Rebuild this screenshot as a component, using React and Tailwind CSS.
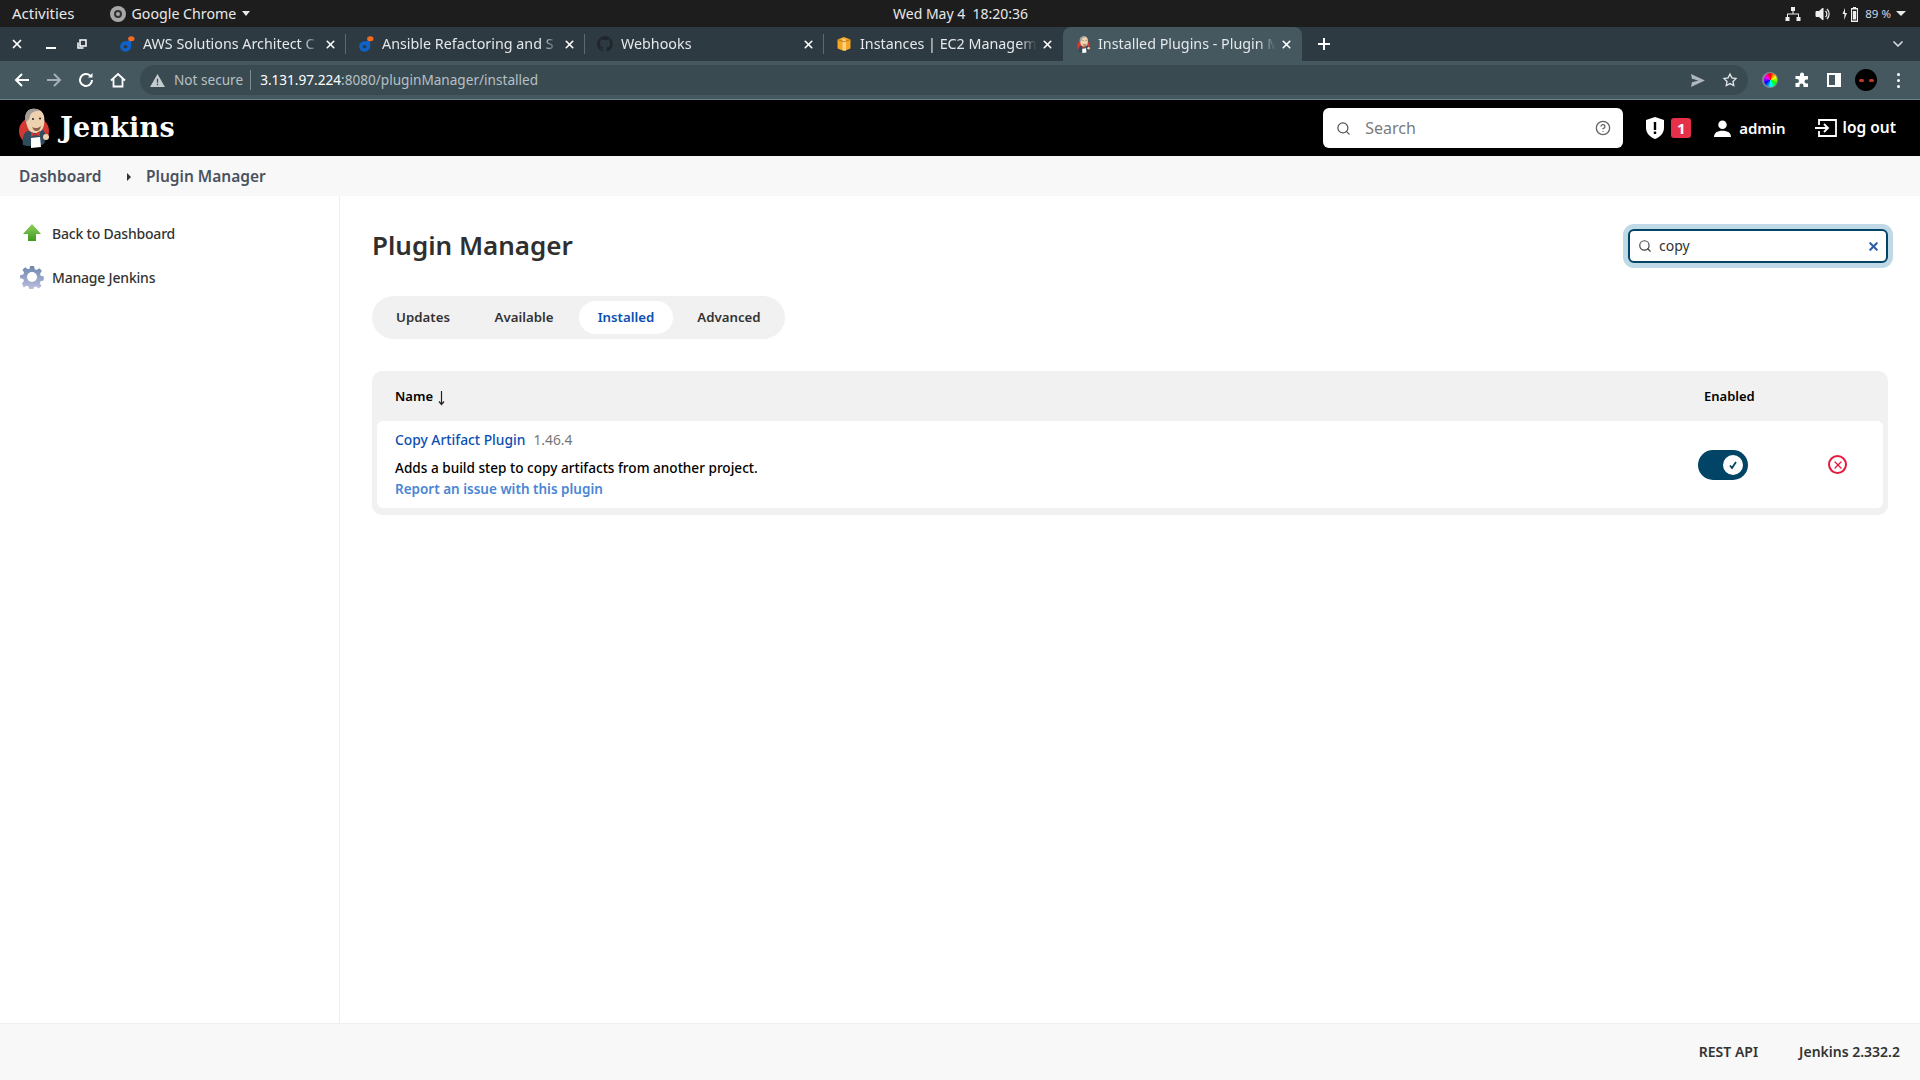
import { ChevronDown, CircleHelp, Search, X } from 'lucide-react';

const SANS = "font-['Noto_Sans',sans-serif]";

function JenkinsLogo({ className }) {
  return (
    <svg viewBox="0 0 30 40" className={className}>
      <ellipse cx="15" cy="23" rx="15" ry="14" fill="#d33833" />
      <path d="M4 37c-1-6 0-11 4-14l8 1 7-3 3 4 1 5-2 6-5 2H8z" fill="#2f4b5c" />
      <path d="M7 14C5 8 7 2 13 1c6-1 11 2 12 7 1 6 0 12-3 15-3 2-7 3-10 1-3-2-4-6-5-10z" fill="#eed2b0" />
      <path d="M7 14C5 8 7 2 13 1c3-.5 6 0 8 2-5-.5-9 1-10 5-.5 3-2 5-4 6z" fill="#a39d98" />
      <path d="M13 19c3 2 7 1 9-1-1 4-2 5-5 5-2 0-3-2-4-4z" fill="#8f5f45" />
      <circle cx="14" cy="11" r="1" fill="#222" />
      <circle cx="21" cy="10.500" r="1" fill="#222" />
      <path d="M12 24l4 2 5-3v5l-5-1-4 2z" fill="#d33833" />
      <path d="M12 30l9-1 1 10-10 1z" fill="#fff" />
      <circle cx="27" cy="29" r="3" fill="#eed2b0" />
    </svg>
  );
}

function BlueDotIcon() {
  return (
    <svg viewBox="0 0 16 16" className="w-4 h-4 shrink-0">
      <path d="M10.500 4.500h1.600v6.200a5.500 5.200 0 1 1-5.800-5.400h1.500z" fill="#0f62c9" />
      <ellipse cx="6.500" cy="10.700" rx="2" ry="1.800" fill="#2e3a41" />
      <ellipse cx="12.300" cy="2.800" rx="3.200" ry="2.500" fill="#f26b21" />
    </svg>
  );
}

function GithubIcon() {
  return (
    <svg viewBox="0 0 16 16" className="w-4 h-4 shrink-0" fill="#1f272c">
      <path d="M8 0a8 8 0 0 0-2.500 15.600c.4.100.5-.2.500-.4v-1.400c-2.200.5-2.700-1-2.700-1-.4-.9-.9-1.200-.9-1.200-.7-.5.100-.5.100-.5.800.1 1.200.8 1.200.8.700 1.200 1.900.9 2.300.7.100-.5.300-.9.500-1.100-1.800-.2-3.600-.9-3.600-4 0-.9.300-1.600.8-2.100-.1-.2-.4-1 .1-2.100 0 0 .7-.2 2.200.8a7.600 7.600 0 0 1 4 0c1.500-1 2.200-.8 2.200-.8.400 1.100.2 1.900.1 2.100.5.600.8 1.300.8 2.100 0 3.100-1.900 3.700-3.700 3.900.3.300.5.700.5 1.500v2.200c0 .2.100.5.600.4A8 8 0 0 0 8 0z" />
    </svg>
  );
}

function BoxIcon() {
  return (
    <svg viewBox="0 0 16 16" className="w-4 h-4 shrink-0">
      <path d="M1.500 3.500 8 1l6.500 2.500v9L8 15l-6.500-2.500z" fill="#f5a623" />
      <path d="M5.800 2 10 3.700v11L6.500 14V3.500z" fill="#fbd38a" />
      <path d="M1.500 3.500 8 5.800l6.500-2.300" stroke="#8a5a10" strokeWidth=".6" fill="none" />
    </svg>
  );
}

function Tab({ icon, title, active, last }) {
  return (
    <div
      className={`relative w-[239px] flex items-center shrink-0 pl-[12px] pr-[9px] ${
        active ? 'h-[38px] pb-[4px] bg-[#45575f] rounded-t-[8px]' : 'h-[34px]'
      }`}
    >
      {icon}
      <span className="ml-[8px] flex-1 whitespace-nowrap overflow-hidden text-[14.3px] text-[#e4e8ea] [mask-image:linear-gradient(to_right,black_90%,transparent)]">
        {title}
      </span>
      <X size={13} strokeWidth={3} className="text-white ml-[4px] shrink-0" />
      {!last && <div className="absolute right-0 top-[7px] h-[20px] w-px bg-[#5c6b72]" />}
    </div>
  );
}

function TopBar() {
  return (
    <div className="h-[27px] bg-[#1d1d1d] flex items-center text-[15px] text-[#e8e8e8] relative">
      <span className="ml-[12px]">Activities</span>
      <span className="ml-[35px] w-[16px] h-[16px] rounded-full bg-[#a8a8a8] flex items-center justify-center">
        <span className="w-[8px] h-[8px] rounded-full border-2 border-[#333]" />
      </span>
      <span className="ml-[6px] text-[14.200px]">Google Chrome</span>
      <span className="ml-[6px] border-x-[4.5px] border-x-transparent border-t-[5px] border-t-[#e8e8e8]" />
      <span className="absolute left-[893px] top-[3px] text-[14px] whitespace-pre">Wed May 4  18:20:36</span>
      <div className="ml-auto flex items-center mr-[14px]">
        <svg viewBox="0 0 16 16" className="w-[16px] h-[16px]" fill="#eee">
          <path d="M6 1h4v4H8.500v2.500H14V11h1.500v4h-4v-4H13V8.500H3V11h1.500v4h-4v-4H2V7.500h5.500V5H6z" />
        </svg>
        <svg viewBox="0 0 16 16" className="w-[16px] h-[16px] ml-[14px]" fill="none" stroke="#eee">
          <path d="M1 5.500h3L8 2v12l-4-3.500H1z" fill="#eee" />
          <path d="M10.500 5a4 4 0 0 1 0 6M12 3a7 7 0 0 1 0 10" strokeWidth="1.200" />
        </svg>
        <svg viewBox="0 0 20 16" className="w-[20px] h-[16px] ml-[11px]" fill="#eee">
          <path d="M3 2 0.500 8h2L2 14l3-7H3z" />
          <path d="M9 2h2V1h3v1h2v14H9zm1 1.500v11h5v-11z" />
          <rect x="10.800" y="5" width="3.400" height="8.500" />
        </svg>
        <span className="text-[11.500px] ml-[3px] text-[#cfd8e8]">89 %</span>
        <span className="ml-[5px] border-x-[5px] border-x-transparent border-t-[5px] border-t-[#e8e8e8]" />
      </div>
    </div>
  );
}

function TabStrip() {
  return (
    <div className="h-[34px] bg-[#2e3a41] flex items-start">
      <div className="w-[107px] h-[34px] flex items-center shrink-0">
        <X size={14} strokeWidth={3} className="text-white ml-[10px]" />
        <span className="ml-[22px] w-[10px] h-[2px] bg-white mt-[8px]" />
        <svg viewBox="0 0 10 10" className="w-[10px] h-[10px] ml-[21px]" fill="none" stroke="#fff" strokeWidth="1.500">
          <rect x="3" y="1" width="6" height="6" />
          <path d="M1 3.500V9h5.500" />
        </svg>
      </div>
      <Tab icon={<BlueDotIcon />} title="AWS Solutions Architect C" />
      <Tab icon={<BlueDotIcon />} title="Ansible Refactoring and S" />
      <Tab icon={<GithubIcon />} title="Webhooks" />
      <Tab icon={<BoxIcon />} title="Instances | EC2 Managem" last />
      <Tab icon={<JenkinsLogo className="w-[13px] h-[17px] shrink-0 ml-[2px]" />} title="Installed Plugins - Plugin M" active last />
      <svg viewBox="0 0 12 12" className="w-[12px] h-[12px] ml-[16px] mt-[11px]" stroke="#fff" strokeWidth="2">
        <path d="M6 0v12M0 6h12" />
      </svg>
      <ChevronDown size={16} strokeWidth={2.500} className="text-[#d7dde0] ml-auto mr-[14px] mt-[9px]" />
    </div>
  );
}

function Toolbar() {
  return (
    <div className="h-[39px] bg-[#45575f] flex items-center border-b border-b-[#6f8089] relative z-10">
      <div className="w-[140px] flex items-center shrink-0 pl-[14px]">
        <svg viewBox="0 0 16 16" className="w-[16px] h-[16px]" fill="none" stroke="#fff" strokeWidth="2">
          <path d="M15 8H2M8 2 2 8l6 6" />
        </svg>
        <svg viewBox="0 0 16 16" className="w-[16px] h-[16px] ml-[16px]" fill="none" stroke="#a4b0b6" strokeWidth="2">
          <path d="M1 8h13M8 2l6 6-6 6" />
        </svg>
        <svg viewBox="0 0 16 16" className="w-[16px] h-[16px] ml-[16px]" fill="none" stroke="#fff" strokeWidth="2">
          <path d="M14 8a6 6 0 1 1-1.800-4.300" />
          <path d="M14.500 1v4.500H10" fill="#fff" stroke="none" />
        </svg>
        <svg viewBox="0 0 16 16" className="w-[16px] h-[16px] ml-[16px]" fill="none" stroke="#fff" strokeWidth="1.800">
          <path d="M1 8.500 8 2l7 6.500M3.500 7v7.500h9V7" />
        </svg>
      </div>
      <div className="w-[1608px] h-[30px] rounded-full bg-[#3a4a51] flex items-center shrink-0">
        <svg viewBox="0 0 16 14" className="w-[15px] h-[13px] ml-[10px]">
          <path d="M8 0 16 14H0z" fill="#c4cccf" />
          <path d="M7.300 5h1.400v4.500H7.300zM7.300 10.500h1.400V12H7.300z" fill="#3a4a51" />
        </svg>
        <span className="ml-[9px] text-[13.600px] text-[#b6c0c5]">Not secure</span>
        <span className="ml-[7px] w-px h-[20px] bg-[#7f8d94]" />
        <span className="ml-[9px] text-[13.600px] text-[#b6c0c5]">
          <span className="text-white">3.131.97.224</span>:8080/pluginManager/installed
        </span>
        <svg viewBox="0 0 16 14" className="w-[15px] h-[13px] ml-auto" fill="#aeb8bc">
          <path d="M1 0 16 7 1 14l1-5 7-2-7-2z" />
        </svg>
        <svg viewBox="0 0 24 24" className="w-[16px] h-[16px] ml-[17px] mr-[10px]" fill="none" stroke="#dfe4e6" strokeWidth="2">
          <path d="m12 3 2.800 5.800 6.200.9-4.500 4.400 1.100 6.300L12 17.400 6.400 20.400l1.100-6.300L3 9.700l6.200-.9z" />
        </svg>
      </div>
      <span className="ml-[14px] w-[16px] h-[16px] rounded-full bg-[#7c8b92] flex items-center justify-center">
        <span className="w-[13px] h-[14px] rounded-full bg-[conic-gradient(#f00,#ff0,#0f0,#0ff,#00f,#f0f,#f00)]" />
      </span>
      <svg viewBox="0 0 16 16" className="w-[16px] h-[16px] ml-[16px]" fill="#fff">
        <path d="M6 2.500a2 2 0 0 1 4 0V4h4v3.500h-1.500a2 2 0 0 0 0 4H14V15H9.500v-1.500a2 2 0 0 0-4 0V15H1.500v-4H3a2 2 0 0 0 0-4H1.500V4H6z" />
      </svg>
      <span className="ml-[17px] w-[14px] h-[14px] border-[2px] border-white border-r-[6px]" />
      <span className="ml-[14px] w-[22px] h-[22px] rounded-full bg-black flex items-center justify-center gap-[5px]">
        <span className="w-[5px] h-[3px] rounded-full bg-[#c0392b]" />
        <span className="w-[5px] h-[3px] rounded-full bg-[#c0392b]" />
      </span>
      <span className="ml-[20px] flex flex-col gap-[3px]">
        <span className="w-[3px] h-[3px] rounded-full bg-white" />
        <span className="w-[3px] h-[3px] rounded-full bg-white" />
        <span className="w-[3px] h-[3px] rounded-full bg-white" />
      </span>
    </div>
  );
}

function JenkinsHeader() {
  return (
    <header className="h-[56px] bg-black flex items-center text-white">
      <JenkinsLogo className="w-[30px] h-[40px] ml-[19px]" />
      <span className="ml-[11px] font-['DejaVu_Serif',serif] font-bold text-[27px] tracking-[0.2px]">Jenkins</span>
      <div className="ml-auto w-[300px] h-[40px] bg-white rounded-[6px] flex items-center text-[#6b6b6b]">
        <Search size={15} className="ml-[13px] text-[#555]" />
        <span className="ml-[14px] text-[16px] text-[#7b7b7b]">Search</span>
        <CircleHelp size={16} className="ml-auto mr-[12px] text-[#666]" />
      </div>
      <svg viewBox="0 0 18 22" className="w-[18px] h-[22px] ml-[23px]">
        <path d="M9 0 18 3v8c0 5-4 9-9 11-5-2-9-6-9-11V3z" fill="#fff" />
        <path d="M7.800 5h2.400v8H7.800zM7.800 14.500h2.400V17H7.800z" fill="#000" />
      </svg>
      <span className="ml-[7px] w-[20px] h-[20px] rounded-[3px] bg-[#e6304a] text-[15px] font-bold flex items-center justify-center">1</span>
      <svg viewBox="0 0 16 16" className="w-[17px] h-[17px] ml-[23px]" fill="#fff">
        <circle cx="8" cy="4.500" r="4" />
        <path d="M0 16c0-4 3-6 8-6s8 2 8 6z" />
      </svg>
      <span className="ml-[8px] text-[15px] font-semibold">admin</span>
      <svg viewBox="0 0 22 18" className="w-[22px] h-[18px] ml-[29px]" fill="none" stroke="#fff" strokeWidth="1.800">
        <path d="M4 6V1h17v16H4v-5" />
        <path d="M0 9h13M9 5l4 4-4 4" />
      </svg>
      <span className="ml-[6px] mr-[24px] text-[15.500px] font-semibold">log out</span>
    </header>
  );
}

function SideLink({ icon, label }) {
  return (
    <div className="h-[24px] flex items-center mb-[20px]">
      <span className="w-[33px] flex justify-center pr-[8px]">{icon}</span>
      <span className="text-[14px] font-medium text-[#333] tracking-[-0.2px]">{label}</span>
    </div>
  );
}

function Sidebar() {
  return (
    <aside className="w-[340px] shrink-0 border-r border-r-[#eeeeee] pt-[25px] pl-[19px]">
      <SideLink
        label="Back to Dashboard"
        icon={
          <svg viewBox="0 0 20 20" className="w-[20px] h-[20px]">
            <defs>
              <linearGradient id="g1" x1="0" y1="0" x2="0" y2="1">
                <stop offset="0" stopColor="#8fcf5f" />
                <stop offset="1" stopColor="#3f9a1e" />
              </linearGradient>
            </defs>
            <path d="M10 1 19 11h-5v7H6v-7H1z" fill="url(#g1)" />
          </svg>
        }
      />
      <SideLink
        label="Manage Jenkins"
        icon={
          <svg viewBox="0 0 24 24" className="w-[24px] h-[24px]">
            <defs>
              <linearGradient id="g2" x1="0" y1="0" x2="0" y2="1">
                <stop offset="0" stopColor="#6d86ad" />
                <stop offset="1" stopColor="#bcbfe0" />
              </linearGradient>
            </defs>
            <path
              d="M10 1h4l.7 3.200 2 .8 2.800-1.700 2.400 2.800-1.900 2.600.6 2 3.200.8v4l-3.200.7-.8 2 1.700 2.800-2.800 2.400-2.600-1.900-2 .6-.9 1.900h-4l-.7-2.500-2-.8-2.800 1.700L2 18.600l1.900-2.600-.6-2L.1 13.200v-3l3.200-.7.800-2L2.400 4.700l2.800-2.400 2.600 1.900 2-.6z"
              fill="url(#g2)"
            />
            <circle cx="12" cy="12" r="5" fill="#fff" />
          </svg>
        }
      />
    </aside>
  );
}

function Tabs() {
  return (
    <div className="mt-[33px] h-[43px] w-[413px] p-[5px] flex gap-[5px] rounded-full bg-[#f1f1f1] text-[13.250px] font-semibold text-[#333]">
      <div className="h-[33px] w-[92px] flex items-center justify-center">Updates</div>
      <div className="h-[33px] w-[100px] flex items-center justify-center">Available</div>
      <div className="h-[33px] w-[94px] flex items-center justify-center rounded-full bg-white text-[#0b4fb3]">Installed</div>
      <div className="h-[33px] w-[102px] flex items-center justify-center">Advanced</div>
    </div>
  );
}

function PluginTable() {
  return (
    <div className="mt-[32px] rounded-[10px] bg-[#f1f1f1] px-[5px] pb-[7px]">
      <div className="h-[50px] pt-[1px] flex items-center text-[13px] font-semibold text-black">
        <span className="ml-[18px]">Name</span>
        <svg viewBox="0 0 9 16" className="w-[9px] h-[16px] ml-[4px] mt-[2px]" fill="none" stroke="#222" strokeWidth="1.200">
          <path d="M4.500 1v13M2 11.500l2.500 3 2.500-3" />
        </svg>
        <span className="ml-auto w-[185px] pl-[6px]">Enabled</span>
      </div>
      <div className="h-[87px] bg-white rounded-[6px] flex items-center">
        <div className="ml-[18px] flex-1">
          <div className="flex items-center h-[20px] text-[13.800px]">
            <span className="font-medium text-[#0b4fb3]">Copy Artifact Plugin</span>
            <span className="ml-[8px] text-[#777]">1.46.4</span>
          </div>
          <div className="mt-[8px] h-[20px] text-[13.600px] font-medium text-black leading-[20px]">Adds a build step to copy artifacts from another project.</div>
          <div className="mt-px h-[20px] text-[13.500px] font-semibold text-[#4a86d4] leading-[20px]">Report an issue with this plugin</div>
        </div>
        <div className="w-[185px] flex items-center shrink-0">
          <div className="w-[50px] h-[30px] rounded-full bg-[#014465] flex items-center justify-end pr-[5px]">
            <span className="w-[20px] h-[20px] rounded-full bg-white flex items-center justify-center">
              <svg viewBox="0 0 10 10" className="w-[10px] h-[10px]" fill="none" stroke="#014465" strokeWidth="1.800">
                <path d="M2 5.500 4 8l4-6" />
              </svg>
            </span>
          </div>
          <span className="ml-[80px] w-[19px] h-[19px] rounded-full border-2 border-[#e6183c] flex items-center justify-center">
            <X size={12} strokeWidth={2.500} className="text-[#e6183c]" />
          </span>
        </div>
      </div>
    </div>
  );
}

export default function App() {
  return (
    <div className={`w-[1920px] h-[1080px] flex flex-col overflow-hidden bg-white ${SANS}`}>
      <TopBar />
      <TabStrip />
      <Toolbar />
      <JenkinsHeader />
      <div className="h-[40px] pt-px bg-[#f8f8f8] flex items-center text-[15.500px] font-semibold text-[#4a5260]">
        <span className="ml-[19px] w-[108px]">Dashboard</span>
        <span className="border-y-[4px] border-y-transparent border-l-[4px] border-l-[#333]" />
        <span className="ml-[15px]">Plugin Manager</span>
      </div>
      <div className="flex-1 flex min-h-0">
        <Sidebar />
        <main className="flex-1 px-[32px] pt-[33px]">
          <div className="h-[34px] flex items-center justify-between">
            <h1 className="-mt-[2px] text-[26px] font-semibold text-[#2f2f2f]">Plugin Manager</h1>
            <div className="w-[260px] h-[34px] rounded-[6px] border-2 border-[#014465] ring-[5px] ring-[#bfd9e6] bg-white flex items-center">
              <Search size={14} className="ml-[8px] text-[#444]" />
              <span className="ml-[7px] -mt-px text-[14px] text-[#333]">copy</span>
              <X size={13} strokeWidth={4} className="ml-auto mr-[6px] text-[#2f5fa5]" />
            </div>
          </div>
          <Tabs />
          <PluginTable />
        </main>
      </div>
      <footer className="h-[57px] pb-px bg-[#f8f8f8] border-t border-t-[#efefef] flex items-center justify-end text-[14px] font-semibold text-[#333] pr-[20px]">
        <span>REST API</span>
        <span className="ml-[41px]">Jenkins 2.332.2</span>
      </footer>
    </div>
  );
}
